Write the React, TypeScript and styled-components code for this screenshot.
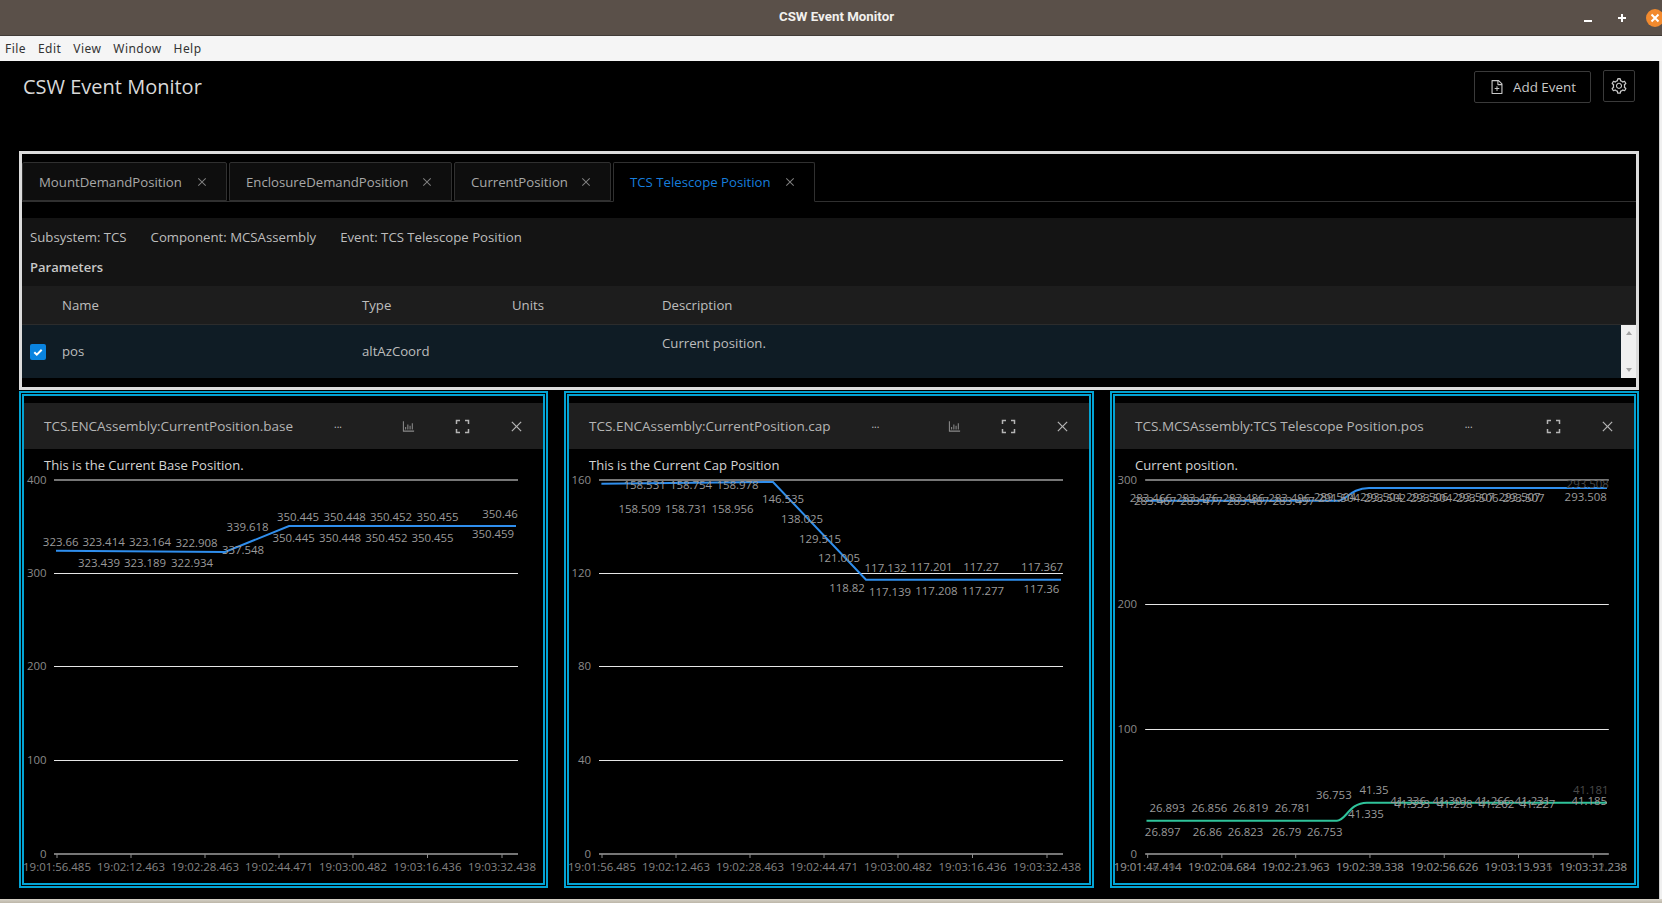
import React from "react";
import styled, { createGlobalStyle } from "styled-components";
import {
  AiOutlineBarChart,
  AiOutlineClose,
  AiOutlineFileAdd,
  AiOutlineSetting,
} from "react-icons/ai";

const Global = createGlobalStyle`
  html, body { margin: 0; padding: 0; background: #000; overflow: hidden; }
  #root { height: 903px; width: 1662px; }
  * { box-sizing: border-box; }
`;

const UI = `"Open Sans", "Noto Sans", sans-serif`;

const Page = styled.div`
  width: 1662px;
  height: 903px;
  display: flex;
  flex-direction: column;
  font-family: ${UI};
  font-size: 13.2px;
  overflow: hidden;
`;

const TitleBar = styled.div`
  height: 36px;
  flex: none;
  display: grid;
  grid-template-columns: 1fr auto 1fr;
  align-items: center;
  padding-left: 11px;
  background: #5a5049;
  border-bottom: 1px solid #413b37;
  overflow: hidden;
`;

const WindowTitle = styled.div`
  grid-column: 2;
  padding-bottom: 2px;
  font: 700 13.3px "Roboto", "Noto Sans", sans-serif;
  color: #f2f0ee;
`;

const WindowControls = styled.div`
  grid-column: 3;
  justify-self: end;
  display: flex;
  margin-right: -10px;
`;

const WindowButton = styled.div`
  width: 33.5px;
  height: 35px;
  display: flex;
  align-items: center;
  justify-content: center;
`;

const CloseDot = styled.div`
  width: 18px;
  height: 18px;
  border-radius: 50%;
  background: #f28a2e;
  display: flex;
  align-items: center;
  justify-content: center;
`;

const MenuBar = styled.div`
  height: 25px;
  flex: none;
  display: flex;
  align-items: center;
  gap: 12px;
  padding-left: 5px;
  background: #f5f5f5;
  color: #333;
  font: 12px "Noto Sans", sans-serif;
  letter-spacing: 0.45px;
`;

const Workspace = styled.div`
  flex: 1;
  min-height: 0;
  display: flex;
`;

const Main = styled.main`
  flex: 1;
  background: #000;
  padding-left: 19px;
`;

const EdgeStrip = styled.div`
  width: 3px;
  background: #f0f0f0;
  border-left: 1px solid #cfcfcf;
`;

const FootStrip = styled.div`
  height: 4px;
  flex: none;
  background: linear-gradient(#d6d2c8, #bcb6a8);
`;

const Header = styled.header`
  height: 90px;
  display: flex;
  align-items: flex-start;
  padding-top: 9px;
  width: 1616px;
`;

const AppTitle = styled.h1`
  margin: 2px auto 0 4px;
  font: 500 20px/30px ${UI};
  color: #d9d9d9;
`;

const OutlineButton = styled.button<{ $square?: boolean }>`
  height: 32px;
  width: ${(p) => (p.$square ? "32px" : "117px")};
  margin-left: ${(p) => (p.$square ? "12px" : "0")};
  margin-top: ${(p) => (p.$square ? "0" : "1px")};
  display: flex;
  align-items: center;
  justify-content: center;
  gap: 8px;
  padding: 0;
  background: transparent;
  border: 1px solid #3a3a3a;
  border-radius: 2px;
  color: #c8c8c8;
  font: 13.4px ${UI};
`;

const EventBox = styled.section`
  width: 1620px;
  height: 239px;
  border: 3px solid #dcdcdc;
  padding-top: 8px;
  display: flex;
  flex-direction: column;
`;

const TabStrip = styled.div`
  height: 40px;
  flex: none;
  display: flex;
  gap: 2px;
  border-bottom: 1px solid #303030;
`;

const Tab = styled.div<{ $active?: boolean; $width: number }>`
  width: ${(p) => p.$width}px;
  height: ${(p) => (p.$active ? "40px" : "39px")};
  display: flex;
  align-items: center;
  padding: 0 18px 0 16px;
  justify-content: space-between;
  background: ${(p) => (p.$active ? "#000" : "#0e0e0e")};
  border: 1px solid #303030;
  border-bottom-color: ${(p) => (p.$active ? "#000" : "#303030")};
  border-radius: 2px 2px 0 0;
  color: ${(p) => (p.$active ? "#177ddc" : "#a8a8a8")};
  svg { color: #808080; }
`;

const Details = styled.div`
  margin-top: 16px;
  background: #141414;
  flex: none;
`;

const MetaRow = styled.div`
  height: 38px;
  display: flex;
  align-items: center;
  gap: 24px;
  padding: 0 0 0 8px;
  color: #bdbdbd;
`;

const SectionLabel = styled.div`
  height: 30px;
  padding: 1px 0 0 8px;
  line-height: 20px;
  font-size: 13px;
  font-weight: 600;
  color: #c8c8c8;
`;

const ParamRow = styled.div<{ $head?: boolean }>`
  display: grid;
  grid-template-columns: 40px 300px 150px 150px 1fr 15px;
  height: ${(p) => (p.$head ? "39px" : "53px")};
  align-items: ${(p) => (p.$head ? "center" : "stretch")};
  background: ${(p) => (p.$head ? "#1d1d1d" : "#0f1c25")};
  border-bottom: ${(p) => (p.$head ? "1px solid #2c2c2c" : "none")};
  color: #bdbdbd;
`;

const Cell = styled.div<{ $top?: boolean }>`
  display: flex;
  align-items: ${(p) => (p.$top ? "flex-start" : "center")};
  padding-top: ${(p) => (p.$top ? "8px" : "0")};
  padding-bottom: ${(p) => (p.$top ? "0" : "2px")};
  line-height: 20px;
`;

const CheckMark = styled.span`
  width: 16px;
  height: 16px;
  margin: 2px 0 0 8px;
  background: #0a84e0;
  border-radius: 2px;
  display: flex;
  align-items: center;
  justify-content: center;
`;

const Scrollbar = styled.div`
  background: #f0f0f0;
  display: flex;
  flex-direction: column;
  justify-content: space-between;
  align-items: center;
  padding: 6px 0;
`;

const Arrow = styled.i<{ $down?: boolean }>`
  width: 0;
  height: 0;
  border-left: 3.5px solid transparent;
  border-right: 3.5px solid transparent;
  ${(p) => (p.$down ? "border-top" : "border-bottom")}: 4px solid #a3a3a3;
`;

const Cards = styled.div`
  margin-top: 1px;
  display: flex;
  gap: 16px;
`;

const Card = styled.article<{ $width: number }>`
  width: ${(p) => p.$width}px;
  height: 497px;
  border: 5px double #03a3d3;
  padding-top: 7px;
  display: flex;
  flex-direction: column;
`;

const CardHead = styled.div`
  height: 46px;
  flex: none;
  display: flex;
  align-items: center;
  padding-left: 20px;
  background: #1f1f1f;
  color: #b5b5b5;
`;

const CardTitle = styled.span`
  white-space: nowrap;
  font-size: 13.5px;
`;

const Dots = styled.span`
  margin-left: 41px;
  padding-bottom: 4px;
  font-size: 10px;
  color: #c8c8c8;
`;

const CardActions = styled.div`
  margin-left: auto;
  display: flex;
`;

const IconButton = styled.span<{ $dim?: boolean }>`
  width: 54px;
  display: flex;
  justify-content: center;
  color: ${(p) => (p.$dim ? "#8a8a8a" : "#b5b5b5")};
`;

const CardNote = styled.div`
  height: 23px;
  flex: none;
  padding: 7px 0 0 20px;
  line-height: 18px;
  font-size: 13.05px;
  color: #d4d4d4;
`;

const Plot = styled.svg`
  display: block;
  flex: none;
  text {
    font: 11.45px ${UI};
    fill: #9a9a9a;
    text-anchor: middle;
  }
  text.end { text-anchor: end; fill: #8a8a8a; }
  text.axis { fill: #858585; }
  text.axisback { fill: #4e4e4e; }
  text.dim { fill: #4a4a4a; }
`;

type L = [string, number, number, string?];
type Spec = {
  width: number;
  left: number;
  title: string;
  note: string;
  chart?: boolean;
  x1: number;
  x2: number;
  yLabelX: number;
  grid: [string, number][];
  ticks: number[];
  xLabels: string[];
  xLabels2?: string[];
  lines: [string, string][];
  labels: L[];
};

const TICKS = [57, 131, 205, 279, 353, 427.5, 502];
const XL = ["19:01:56.485", "19:02:12.463", "19:02:28.463", "19:02:44.471", "19:03:00.482", "19:03:16.436", "19:03:32.438"];

const c3 = (x: number) => 1100 + (x - 1100) * 1.0036;

const specs: Spec[] = [
  {
    width: 529,
    left: 24,
    title: "TCS.ENCAssembly:CurrentPosition.base",
    note: "This is the Current Base Position.",
    chart: true,
    x1: 54,
    x2: 518,
    yLabelX: 46.5,
    grid: [["400", 480], ["300", 573], ["200", 666], ["100", 760], ["0", 854]],
    ticks: TICKS,
    xLabels: XL,
    lines: [["M56 550.7 L225 552 L289 526 L516 526", "#2f8eed"]],
    labels: [
      ["323.66", 60.7, 542], ["323.414", 103.6, 542], ["323.164", 150, 542], ["322.908", 196.5, 543],
      ["323.439", 99, 563], ["323.189", 145, 563], ["322.934", 192, 563],
      ["339.618", 247.5, 527], ["337.548", 243, 550],
      ["350.445", 298, 517], ["350.448", 344.6, 517], ["350.452", 391, 517], ["350.455", 437.5, 517], ["350.46", 500, 514],
      ["350.445", 293.6, 538], ["350.448", 340, 538], ["350.452", 386.4, 538], ["350.455", 432.5, 538], ["350.459", 493, 534],
    ],
  },
  {
    width: 530,
    left: 569,
    title: "TCS.ENCAssembly:CurrentPosition.cap",
    note: "This is the Current Cap Position",
    chart: true,
    x1: 599,
    x2: 1063,
    yLabelX: 591,
    grid: [["160", 480], ["120", 573], ["80", 666], ["40", 760], ["0", 854]],
    ticks: TICKS.map((t) => t + 545),
    xLabels: XL,
    lines: [["M601.4 483.7 L773 482 L866 579.7 L1061 579.7", "#2f8eed"]],
    labels: [
      ["158.531", 644.6, 485], ["158.754", 691, 485], ["158.978", 737.5, 485],
      ["158.509", 639.6, 509], ["158.731", 686, 509], ["158.956", 732.5, 509],
      ["146.535", 783, 499], ["138.025", 802, 519], ["129.515", 820, 539], ["121.005", 839, 558],
      ["117.132", 885.7, 568], ["117.201", 931.4, 567], ["117.27", 981, 567], ["117.367", 1042, 567],
      ["118.82", 847, 588], ["117.139", 890, 592], ["117.208", 936.4, 591], ["117.277", 983, 591], ["117.36", 1041.4, 589],
    ],
  },
  {
    width: 529,
    left: 1115,
    title: "TCS.MCSAssembly:TCS Telescope Position.pos",
    note: "Current position.",
    x1: c3(1145),
    x2: c3(1607),
    yLabelX: c3(1137),
    grid: [["300", 480], ["200", 604], ["100", 729], ["0", 854]],
    ticks: [1147.5, 1221.4, 1295, 1369, 1443, 1517, 1591.4].map(c3),
    xLabels: ["19:01:47.414", "19:02:04.684", "19:02:21.963", "19:02:39.338", "19:02:56.626", "19:03:13.931", "19:03:31.238"],
    xLabels2: ["19:01:48.494", "19:02:05.684", "19:02:23.963", "19:02:38.338", "19:02:58.626", "19:03:15.935", "19:03:32.238"],
    lines: [
      ["M1146 500.7 L1338 500.7 C1346 500.7 1351 488 1369 488 L1607 488", "#2f8eed"],
      ["M1146.5 820.7 L1337 820.7 C1346 820.7 1349 802.7 1367 802.7 L1607 802.7", "#2fc39a"],
    ],
    labels: ([
      ["283.466", 1150.7, 498], ["283.476", 1196.8, 498], ["283.486", 1243, 498], ["283.496", 1288.6, 498],
      ["283.467", 1155, 501], ["283.477", 1201, 501], ["283.487", 1247.5, 501], ["283.497", 1293, 501],
      ["289.504", 1334, 497], ["293.504", 1380, 497], ["293.506", 1426, 497], ["293.507", 1472, 497], ["293.507", 1518, 497],
      ["291.504", 1338, 498], ["293.502", 1384, 498], ["293.504", 1430, 498], ["293.506", 1476, 498], ["293.507", 1522, 498],
      ["293.508", 1586, 484, "dim"], ["293.508", 1584, 497],
      ["26.893", 1167, 808], ["26.856", 1209, 808], ["26.819", 1250, 808], ["26.781", 1292, 808],
      ["36.753", 1333, 795], ["41.35", 1373, 790],
      ["26.897", 1162.5, 832], ["26.86", 1207, 832], ["26.823", 1245, 832], ["26.79", 1286, 832], ["26.753", 1324, 832],
      ["41.335", 1365, 814],
      ["41.336", 1407, 801], ["41.301", 1449, 801], ["41.266", 1491, 801], ["41.231", 1531, 801],
      ["41.333", 1411, 804], ["41.298", 1453.5, 804], ["41.262", 1495, 804], ["41.227", 1536, 804],
      ["41.181", 1589, 790, "dim"], ["41.185", 1587.5, 801],
    ] as L[]).map(([t, x, y, c]) => [t, c3(x), y, c] as L),
  },
];

function ExpandIcon() {
  return (
    <svg width="15" height="15" viewBox="0 0 15 15" fill="none" stroke="currentColor" strokeWidth="1.5">
      <path d="M1.5 5V1.5H5M10 1.5h3.5V5M13.5 10v3.5H10M5 13.5H1.5V10" />
    </svg>
  );
}

function Chart({ s }: { s: Spec }) {
  const w = s.width - 10;
  return (
    <Plot width={w} height={411} viewBox={`${s.left} 472 ${w} 411`}>
      {s.grid.map(([label, y], i) => {
        const edge = i === 0 || i === s.grid.length - 1;
        return (
          <g key={label}>
            <line
              x1={s.x1}
              x2={s.x2}
              y1={edge ? y : y + 0.5}
              y2={edge ? y : y + 0.5}
              stroke={edge ? "#767676" : "#e6e6e6"}
              strokeWidth={edge ? 2 : 1}
            />
            <text className="end" x={s.yLabelX} y={y} dy="0.35em">{label}</text>
          </g>
        );
      })}
      {s.ticks.map((t) => (
        <line key={t} x1={t} x2={t} y1={854} y2={858} stroke="#8c8c8c" strokeWidth={1} />
      ))}
      {s.lines.map(([d, c]) => (
        <path key={d} d={d} fill="none" stroke={c} strokeWidth={2} />
      ))}
      {s.labels.map(([t, x, y, cls], i) => (
        <text key={i} className={cls} x={x} y={y} dy="0.35em">{t}</text>
      ))}
      {s.xLabels2?.map((t, i) => (
        <text key={i} className="axisback" x={s.ticks[i]} y={867} dy="0.35em">{t}</text>
      ))}
      {s.xLabels.map((t, i) => (
        <text key={i} className="axis" x={s.ticks[i]} y={867} dy="0.35em">{t}</text>
      ))}
    </Plot>
  );
}

const tabs = [
  { name: "MountDemandPosition", width: 205 },
  { name: "EnclosureDemandPosition", width: 223 },
  { name: "CurrentPosition", width: 157 },
  { name: "TCS Telescope Position", width: 202, active: true },
];

export default function App() {
  return (
    <Page>
      <Global />
      <TitleBar>
        <WindowTitle>CSW Event Monitor</WindowTitle>
        <WindowControls>
          <WindowButton>
            <svg width="10" height="10" viewBox="0 0 10 10"><path d="M1 8h8" stroke="#fff" strokeWidth="2" /></svg>
          </WindowButton>
          <WindowButton>
            <svg width="10" height="10" viewBox="0 0 10 10"><path d="M1 5h8M5 1v8" stroke="#fff" strokeWidth="2" /></svg>
          </WindowButton>
          <WindowButton>
            <CloseDot>
              <svg width="10" height="10" viewBox="0 0 10 10"><path d="M1.5 1.5l7 7M8.5 1.5l-7 7" stroke="#fff" strokeWidth="2" /></svg>
            </CloseDot>
          </WindowButton>
        </WindowControls>
      </TitleBar>
      <MenuBar>
        <span>File</span>
        <span>Edit</span>
        <span>View</span>
        <span>Window</span>
        <span>Help</span>
      </MenuBar>
      <Workspace>
        <Main>
          <Header>
            <AppTitle>CSW Event Monitor</AppTitle>
            <OutlineButton>
              <AiOutlineFileAdd size={16} />
              Add Event
            </OutlineButton>
            <OutlineButton $square>
              <AiOutlineSetting size={18} />
            </OutlineButton>
          </Header>
          <EventBox>
            <TabStrip>
              {tabs.map((t) => (
                <Tab key={t.name} $width={t.width} $active={t.active}>
                  <span>{t.name}</span>
                  <AiOutlineClose size={12} />
                </Tab>
              ))}
            </TabStrip>
            <Details>
              <MetaRow>
                <span>Subsystem: TCS</span>
                <span>Component: MCSAssembly</span>
                <span>Event: TCS Telescope Position</span>
              </MetaRow>
              <SectionLabel>Parameters</SectionLabel>
              <ParamRow $head>
                <span />
                <span>Name</span>
                <span>Type</span>
                <span>Units</span>
                <span>Description</span>
              </ParamRow>
              <ParamRow>
                <Cell>
                  <CheckMark>
                    <svg width="10" height="10" viewBox="0 0 10 10">
                      <path d="M1.3 5.2l2.5 2.5 4.9-5" fill="none" stroke="#fff" strokeWidth="2" />
                    </svg>
                  </CheckMark>
                </Cell>
                <Cell>pos</Cell>
                <Cell>altAzCoord</Cell>
                <Cell />
                <Cell $top>Current position.</Cell>
                <Scrollbar>
                  <Arrow />
                  <Arrow $down />
                </Scrollbar>
              </ParamRow>
            </Details>
          </EventBox>
          <Cards>
            {specs.map((s) => (
              <Card key={s.title} $width={s.width}>
                <CardHead>
                  <CardTitle>{s.title}</CardTitle>
                  <Dots>...</Dots>
                  <CardActions>
                    {s.chart && (
                      <IconButton $dim>
                        <AiOutlineBarChart size={15} />
                      </IconButton>
                    )}
                    <IconButton>
                      <ExpandIcon />
                    </IconButton>
                    <IconButton>
                      <AiOutlineClose size={15} />
                    </IconButton>
                  </CardActions>
                </CardHead>
                <CardNote>{s.note}</CardNote>
                <Chart s={s} />
              </Card>
            ))}
          </Cards>
        </Main>
        <EdgeStrip />
      </Workspace>
      <FootStrip />
    </Page>
  );
}
